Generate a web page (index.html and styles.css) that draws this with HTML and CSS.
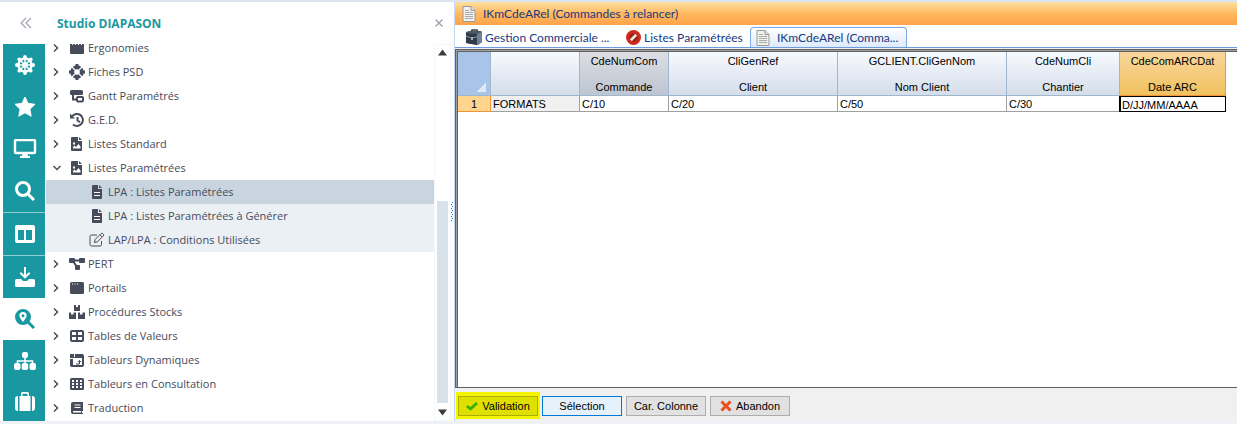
FILE: index.html
```
<!DOCTYPE html>
<html lang="fr">
<head>
    <meta charset="UTF-8">
    <meta name="viewport" content="width=device-width, initial-scale=1.0">
    <title>Studio DIAPASON</title>
    <link rel="stylesheet" href="styles.css">
</head>
<body>
    <div class="app">
        <nav class="rail">
            <button class="rail-toggle" aria-label="Réduire">
                <svg width="12" height="12" viewBox="0 0 12 12"><path d="M6 1L1 6l5 5M11 1L6 6l5 5"/></svg>
            </button>
            <button class="rail-item" aria-label="Navigation">
                <svg width="20" height="20" viewBox="0 0 20 20"><g class="line"><circle cx="10" cy="10" r="6.5" stroke-width="2.400"/><circle cx="10" cy="10" r="2"/><path d="M10 3v14M3 10h14M5 5l10 10M15 5L5 15"/></g><circle cx="10" cy="1.900" r="1.900"/><circle cx="10" cy="18.100" r="1.900"/><circle cx="1.900" cy="10" r="1.900"/><circle cx="18.100" cy="10" r="1.900"/><circle cx="4.300" cy="4.300" r="1.900"/><circle cx="15.700" cy="4.300" r="1.900"/><circle cx="4.300" cy="15.700" r="1.900"/><circle cx="15.700" cy="15.700" r="1.900"/></svg>
            </button>
            <button class="rail-item" aria-label="Favoris">
                <svg width="22" height="22" viewBox="0 0 22 22"><path d="M11 1l3 6.400 7 .9-5.100 4.900 1.300 7L11 16.800 4.800 20.200l1.300-7L1 8.300l7-.9z" stroke="#fff" stroke-linejoin="round"/></svg>
            </button>
            <button class="rail-item" aria-label="Écran">
                <svg width="24" height="20" viewBox="0 0 24 20"><rect class="line2" x="2" y="1" width="20" height="13" rx="1"/><path d="M10 14h4l1 3h2v2H7v-2h2z"/></svg>
            </button>
            <button class="rail-item" aria-label="Recherche">
                <svg width="20" height="20" viewBox="0 0 20 20"><circle class="line3" cx="8" cy="8" r="6.500"/><path class="line3" d="M13 13l6 6"/></svg>
            </button>
            <button class="rail-item split" aria-label="Colonnes">
                <svg width="20" height="18" viewBox="0 0 20 18"><path fill-rule="evenodd" d="M2 0h16a2 2 0 0 1 2 2v14a2 2 0 0 1-2 2H2a2 2 0 0 1-2-2V2a2 2 0 0 1 2-2zM3 5v10h6V5zM11 5v10h6V5z"/></svg>
            </button>
            <button class="rail-item split" aria-label="Télécharger">
                <svg width="20" height="20" viewBox="0 0 20 20"><path d="M9 0h2v8l3-3 1.300 1.400L10 11.800 4.700 6.400 6 5l3 3zM1.500 12H6l2 2h4l2-2h4.500a1.500 1.500 0 0 1 1.500 1.500v5a1.500 1.500 0 0 1-1.500 1.500h-17A1.500 1.500 0 0 1 0 18.500v-5A1.500 1.500 0 0 1 1.500 12z"/></svg>
            </button>
            <button class="rail-item active" aria-label="Localiser">
                <svg width="20" height="20" viewBox="0 0 20 20"><path d="M13 13l6 6" class="line3"/><path fill-rule="evenodd" d="M8 0a8 8 0 1 1 0 16A8 8 0 0 1 8 0zM8 3a3.600 3.600 0 0 0-3.600 3.600C4.400 9 8 13 8 13s3.600-4 3.600-6.400A3.600 3.600 0 0 0 8 3zM8 5.200a1.500 1.500 0 1 1 0 3 1.500 1.500 0 0 1 0-3z"/></svg>
            </button>
            <button class="rail-item" aria-label="Organigramme">
                <svg width="22" height="18" viewBox="0 0 22 18"><path class="line" d="M11 5v7M3.500 12V9h15v3"/><rect x="8" width="6" height="6" rx="2"/><rect y="11" width="6.500" height="7" rx="2"/><rect x="7.700" y="11" width="6.500" height="7" rx="2"/><rect x="15.500" y="11" width="6.500" height="7" rx="2"/></svg>
            </button>
            <button class="rail-item" aria-label="Valise">
                <svg width="20" height="19" viewBox="0 0 20 19"><path d="M3 4v15a3 3 0 0 1-3-3V7a3 3 0 0 1 3-3zM17 4v15a3 3 0 0 0 3-3V7a3 3 0 0 0-3-3z"/><path fill-rule="evenodd" d="M4.500 19V4H6V1.500Q6 0 7.500 0h5Q14 0 14 1.500V4h1.500v15zM7.500 4h5V1.700h-5z"/></svg>
            </button>
        </nav>

        <aside class="panel">
            <header class="panel-head">
                <h1>Studio DIAPASON</h1>
                <button class="panel-close" aria-label="Fermer">
                    <svg width="8" height="8" viewBox="0 0 8 8"><path d="M.5.5l7 7M7.500.5l-7 7"/></svg>
                </button>
            </header>
            <div class="panel-body">
                <div class="tree-wrap">
                    <ul class="tree">
                        <li><a href="#"><svg class="chev" viewBox="0 0 6 8"><path d="M1 .5L4.500 4 1 7.500"/></svg><svg class="ico" viewBox="0 0 16 16"><path d="M1 1h2v4h1V1h2v4h1V1h2v4h1V1h2v4h1V1h2v12a1 1 0 0 1-1 1H2a1 1 0 0 1-1-1z"/></svg>Ergonomies</a></li>
                        <li><a href="#"><svg class="chev" viewBox="0 0 6 8"><path d="M1 .5L4.500 4 1 7.500"/></svg><svg class="ico" viewBox="0 0 16 16"><circle cx="8" cy="8" r="4.800" fill="none" stroke="#474b5a" stroke-width="4"/><path class="cut" d="M3 3l3 3M13 3l-3 3M3 13l3-3M13 13l-3-3"/><path d="M6.500 0h3v3h-3zM6.500 13h3v3h-3zM0 6.500h3v3H0zM13 6.500h3v3h-3z"/></svg>Fiches PSD</a></li>
                        <li><a href="#"><svg class="chev" viewBox="0 0 6 8"><path d="M1 .5L4.500 4 1 7.500"/></svg><svg class="ico" viewBox="0 0 16 16"><rect x="1" y="2" width="13" height="5" rx="1.500"/><path class="stroke" d="M4 7v4.500h4"/><rect class="stroke" x="8" y="9" width="6" height="4.500" rx="1"/></svg>Gantt Paramétrés</a></li>
                        <li><a href="#"><svg class="chev" viewBox="0 0 6 8"><path d="M1 .5L4.500 4 1 7.500"/></svg><svg class="ico" viewBox="0 0 16 16"><path class="stroke" d="M3 4.500A6 6 0 1 1 4 12.500M8.500 5v3.500l2.500 1.700"/><path d="M1 1.500v5h5z"/></svg>G.E.D.</a></li>
                        <li><a href="#"><svg class="chev" viewBox="0 0 6 8"><path d="M1 .5L4.500 4 1 7.500"/></svg><svg class="ico" viewBox="0 0 16 16"><path d="M3 1h6v4h4v9a1 1 0 0 1-1 1H3a1 1 0 0 1-1-1V2a1 1 0 0 1 1-1zM10 1l3 3h-3z"/><path class="white" d="M4 12.500V11l1.500-1.500L7 11l2.500-3 2 2.500v2zM4 6.500h2v2H4z"/></svg>Listes Standard</a></li>
                        <li><a href="#"><svg class="chev open" viewBox="0 0 8 6"><path d="M.5 1L4 4.500 7.500 1"/></svg><svg class="ico" viewBox="0 0 16 16"><path d="M3 1h6v4h4v9a1 1 0 0 1-1 1H3a1 1 0 0 1-1-1V2a1 1 0 0 1 1-1zM10 1l3 3h-3z"/><path class="white" d="M4 12.500V11l1.500-1.500L7 11l2.500-3 2 2.500v2zM4 6.500h2v2H4z"/></svg>Listes Paramétrées</a>
                            <ul class="sub">
                                <li><a href="#" class="selected"><svg class="ico" viewBox="0 0 16 16"><path d="M4 1h5v4h4v9a1 1 0 0 1-1 1H4a1 1 0 0 1-1-1V2a1 1 0 0 1 1-1zM10 1l3 3h-3z"/><path class="white" d="M5 8h6v1H5zM5 11h6v1H5z"/></svg>LPA : Listes Paramétrées</a></li>
                                <li><a href="#"><svg class="ico" viewBox="0 0 16 16"><path d="M4 1h5v4h4v9a1 1 0 0 1-1 1H4a1 1 0 0 1-1-1V2a1 1 0 0 1 1-1zM10 1l3 3h-3z"/><path class="white" d="M5 8h6v1H5zM5 11h6v1H5z"/></svg>LPA : Listes Paramétrées à Générer</a></li>
                                <li><a href="#"><svg class="ico" viewBox="0 0 16 16"><path class="thin" d="M8 3H2.500Q1 3 1 4.500v8Q1 14 2.500 14H11q1.500 0 1.500-1.500V9M5.500 10.500l.6-3L12 1.600q.8-.8 1.700 0l.6.6q.8.9 0 1.700L8.400 9.900zM11 2.800L13.200 5"/></svg>LAP/LPA : Conditions Utilisées</a></li>
                            </ul>
                        </li>
                        <li><a href="#"><svg class="chev" viewBox="0 0 6 8"><path d="M1 .5L4.500 4 1 7.500"/></svg><svg class="ico" viewBox="0 0 16 16"><rect y="2" width="6" height="5" rx="1"/><rect x="10" y="2" width="6" height="5" rx="1"/><rect x="6" y="9" width="5" height="5" rx="1"/><path class="stroke" d="M5 4.500h6M4 5l4 6"/></svg>PERT</a></li>
                        <li><a href="#"><svg class="chev" viewBox="0 0 6 8"><path d="M1 .5L4.500 4 1 7.500"/></svg><svg class="ico" viewBox="0 0 16 16"><rect x="1" y="2" width="14" height="12" rx="1.500"/><path class="white" d="M3 3.500h1v1H3zM5.500 3.500h1v1h-1zM8 3.500h1v1H8z"/></svg>Portails</a></li>
                        <li><a href="#"><svg class="chev" viewBox="0 0 6 8"><path d="M1 .5L4.500 4 1 7.500"/></svg><svg class="ico" viewBox="0 0 16 16"><path d="M5 1h2v2h2V1h2v6H5zM0 8.500h2v2h2.500v-2h2.500V15H0zM9 8.500h2v2h2.500v-2H16V15H9z"/></svg>Procédures Stocks</a></li>
                        <li><a href="#"><svg class="chev" viewBox="0 0 6 8"><path d="M1 .5L4.500 4 1 7.500"/></svg><svg class="ico" viewBox="0 0 16 16"><rect class="stroke" x="2" y="3" width="12" height="10" rx="1"/><path class="stroke" d="M8 3v10M1 8h14"/></svg>Tables de Valeurs</a></li>
                        <li><a href="#"><svg class="chev" viewBox="0 0 6 8"><path d="M1 .5L4.500 4 1 7.500"/></svg><svg class="ico" viewBox="0 0 16 16"><rect class="stroke" x="2" y="3" width="12" height="11" rx="1"/><path d="M1 2h13v4H1zM1 6h3v8H1z"/><path class="thin" d="M7 12h3.500V8.500M9 10l1.500-1.500L12 10"/><path class="white" d="M5 2h1v3H5zM1 6h3v1H1z"/></svg>Tableurs Dynamiques</a></li>
                        <li><a href="#"><svg class="chev" viewBox="0 0 6 8"><path d="M1 .5L4.500 4 1 7.500"/></svg><svg class="ico" viewBox="0 0 16 16"><rect x="1" y="2" width="14" height="12" rx="1.500"/><path class="white" d="M3 4h2v2H3zM7 4h2v2H7zM11 4h2v2h-2zM3 7h2v2H3zM7 7h2v2H7zM11 7h2v2h-2zM3 10h2v2H3zM7 10h2v2H7zM11 10h2v2h-2z"/></svg>Tableurs en Consultation</a></li>
                        <li><a href="#"><svg class="chev" viewBox="0 0 6 8"><path d="M1 .5L4.500 4 1 7.500"/></svg><svg class="ico" viewBox="0 0 16 16"><path d="M4 2h10v9h-1v2h1v1H4a2 2 0 0 1-2-2V4a2 2 0 0 1 2-2z"/><path class="white" d="M5.500 4.500h6v1h-6zM5.500 7h6v1h-6zM4 11h8v1.500H4z"/></svg>Traduction</a></li>
                    </ul>
                </div>
                <div class="scroll">
                    <svg width="9" height="7" viewBox="0 0 9 7"><path d="M4.500.5L9 6.500H0z"/></svg>
                    <div class="thumb"></div>
                    <svg width="9" height="7" viewBox="0 0 9 7"><path d="M0 .5h9l-4.500 6z"/></svg>
                </div>
            </div>
        </aside>

        <div class="splitter">
            <svg width="3" height="20" viewBox="0 0 3 20"><path d="M0 2h1v1H0zM1 0h1v1H1zM0 6h1v1H0zM1 4h1v1H1zM0 10h1v1H0zM1 8h1v1H1zM0 14h1v1H0zM1 12h1v1H1zM0 18h1v1H0zM1 16h1v1H1z"/></svg>
        </div>

        <main class="main">
            <h2 class="titlebar">
                <svg width="14" height="16" viewBox="0 0 14 16"><path d="M1 .5h8l4 4v11H1z" fill="#f1f1ee" stroke="#999"/><path d="M9 .5v4h4" fill="#ddd" stroke="#999"/><path d="M3 4.500h4M3 6.500h8M3 8.500h8M3 10.500h8M3 12.500h8" stroke="#aaa"/></svg>
                IKmCdeARel (Commandes à relancer)
            </h2>
            <div class="tabs">
                <button class="tab first">
                    <svg width="16" height="16" viewBox="0 0 16 16"><path d="M5 3l1-2h5l1 2" fill="none" stroke="#333a44" stroke-width="1.500"/><path d="M0 3l3-1h12l1 1v10l-4 3-12-2z" fill="#4d5966"/><path d="M0 4l11 1v11L0 14z" fill="#303b47"/><path d="M11 5l5-2v10l-5 3z" fill="#718090"/><path d="M0 7l5 2 6-1" fill="none" stroke="#8693a2"/><path d="M5 8h2v3H5z" fill="#a5afba"/></svg>
                    Gestion Commerciale ...
                </button>
                <button class="tab second">
                    <svg width="15" height="15" viewBox="0 0 14 14"><circle cx="7" cy="7" r="7" fill="#cf2a1c"/><circle cx="7" cy="7" r="4" fill="#8f2418"/><path d="M4.500 9.500l5-5" stroke="#f6dcd8" stroke-width="2.500"/></svg>
                    Listes Paramétrées
                </button>
                <button class="tab current">
                    <svg width="14" height="16" viewBox="0 0 14 16"><path d="M1 .5h8l4 4v11H1z" fill="#f1f1ee" stroke="#999"/><path d="M9 .5v4h4" fill="#ddd" stroke="#999"/><path d="M3 4.500h4M3 6.500h8M3 8.500h8M3 10.500h8M3 12.500h8" stroke="#aaa"/></svg>
                    IKmCdeARel (Comma...
                </button>
            </div>
            <div class="sheet">
                <table class="grid">
                    <colgroup>
                        <col class="w-num"><col class="w-s"><col class="w-s"><col class="w-l"><col class="w-l"><col class="w-m"><col class="w-date">
                    </colgroup>
                    <thead>
                        <tr>
                            <th class="corner"></th>
                            <th></th>
                            <th class="locked"><span>CdeNumCom</span><span>Commande</span></th>
                            <th><span>CliGenRef</span><span>Client</span></th>
                            <th><span>GCLIENT.CliGenNom</span><span>Nom Client</span></th>
                            <th><span>CdeNumCli</span><span>Chantier</span></th>
                            <th class="hot"><span>CdeComARCDat</span><span>Date ARC</span></th>
                        </tr>
                    </thead>
                    <tbody>
                        <tr>
                            <th class="num">1</th>
                            <td class="label">FORMATS</td>
                            <td>C/10</td>
                            <td>C/20</td>
                            <td>C/50</td>
                            <td>C/30</td>
                            <td class="cursor">D/JJ/MM/AAAA</td>
                        </tr>
                    </tbody>
                </table>
            </div>
            <footer class="actions">
                <div class="mark">
                    <button class="btn"><svg width="12" height="10" viewBox="0 0 12 10"><path d="M1 5l3.500 3L11 2" fill="none" stroke="#35b000" stroke-width="2.800"/></svg>Validation</button>
                </div>
                <button class="btn default">Sélection</button>
                <button class="btn">Car. Colonne</button>
                <button class="btn"><svg width="12" height="12" viewBox="0 0 12 12"><path d="M1.500 1.500l9 9M10.500 1.500l-9 9" stroke="#e8501e" stroke-width="3"/></svg>Abandon</button>
            </footer>
        </main>
    </div>
</body>
</html>
```
FILE: styles.css
```
* {
    box-sizing: border-box;
}
body {
    margin: 0;
    background: #fff;
    font-family: "Open Sans", sans-serif;
    font-size: 11px;
    color: #474b5a;
}
button {
    margin: 0;
    padding: 0;
    border: none;
    background: none;
    font: inherit;
    color: inherit;
    cursor: pointer;
}
ul {
    list-style: none;
    margin: 0;
    padding: 0;
}
svg {
    display: block;
    flex: none;
}
.app {
    display: flex;
    height: 100vh;
    padding-left: 3px;
    border-top: 2px solid #dbe4ef;
    border-bottom: 3px solid #eef1f5;
}

/* icon rail */
.rail {
    display: flex;
    flex-direction: column;
    width: 42px;
    background: #1998a1;
}
.rail-toggle {
    display: flex;
    flex: none;
    align-items: center;
    justify-content: center;
    height: 42px;
    padding-left: 4px;
    background: #fff;
}
.rail-toggle path {
    fill: none;
    stroke: #a2a9b5;
    stroke-width: 1.3;
}
.rail-item {
    display: flex;
    flex: none;
    align-items: center;
    justify-content: center;
    height: 42px;
    padding-left: 1px;
    fill: #fff;
}
.rail-item:last-child {
    flex: 1;
}
.split {
    height: 43px;
    border-top: 1px solid #8fcdd1;
}
.active {
    background: #fff;
    fill: #1998a1;
}
.line {
    fill: none;
    stroke: #fff;
    stroke-width: 1.5;
}
.line2 {
    fill: none;
    stroke: #fff;
    stroke-width: 2.4;
}
.line3 {
    fill: none;
    stroke: #fff;
    stroke-width: 3;
}
.active .line3 {
    stroke: #1998a1;
}

/* tree panel */
.panel {
    display: flex;
    flex-direction: column;
    width: 406px;
    padding-left: 1px;
}
.panel-head {
    display: flex;
    flex: none;
    align-items: center;
    justify-content: space-between;
    height: 42px;
    padding: 0 8px 0 11px;
}
.panel-head h1 {
    margin: 0;
    font-size: 12px;
    color: #1998a1;
}
.panel-close path {
    fill: none;
    stroke: #a2a9b5;
    stroke-width: 1.5;
}
.panel-body {
    display: flex;
    flex: 1;
    min-height: 0;
}
.tree-wrap {
    flex: 1;
    overflow: hidden;
}
.tree {
    margin-top: -8px;
}
.tree a {
    display: flex;
    align-items: center;
    height: 24px;
    padding: 0 0 1px 7px;
    line-height: 15px;
    color: #474b5a;
    text-decoration: none;
    white-space: nowrap;
}
.chev {
    width: 6px;
    height: 8px;
    margin-right: 10px;
    fill: none;
    stroke: #474b5a;
    stroke-width: 1.5;
}
.open {
    width: 8px;
    height: 6px;
    margin-right: 8px;
}
.ico {
    width: 16px;
    height: 16px;
    margin-right: 3px;
    fill: #474b5a;
}
.stroke {
    fill: none;
    stroke: #474b5a;
    stroke-width: 2;
}
.thin {
    fill: none;
    stroke: #474b5a;
}
.cut {
    stroke: #fff;
    stroke-width: 1.2;
}
.white {
    fill: #fff;
}
.sub {
    background: #ebf0f4;
}
.tree .sub a {
    padding-left: 43px;
}
.tree .selected {
    background: #c8d5e0;
}
.scroll {
    display: flex;
    flex-direction: column;
    align-items: center;
    width: 17px;
    padding: 4px 0;
    border: 1px solid #f5f7fb;
    fill: #3c3c3c;
}
.thumb {
    width: 11px;
    height: 55%;
    margin: auto 0 6px;
    background: #d8e2eb;
}
.splitter {
    display: flex;
    align-items: center;
    width: 4px;
    background: #fbfcfe;
    border-right: 1px solid #c5d9f4;
    fill: #1a73d6;
}

/* right side */
.main {
    display: flex;
    flex: 1;
    flex-direction: column;
    min-width: 0;
    background: #f0f0f0;
}
.titlebar {
    display: flex;
    align-items: center;
    gap: 7px;
    height: 23px;
    margin: 0;
    padding-left: 7px;
    background: linear-gradient(#ffe0a0, #ffb860 50%, #ffa349);
    font-family: Lato, sans-serif;
    font-size: 12px;
    font-weight: normal;
    color: #153a80;
}
.tabs {
    display: flex;
    align-items: flex-end;
    height: 23px;
    padding-left: 6px;
    background: #fff;
    border-bottom: 1px solid #6d9be0;
    font-family: Lato, sans-serif;
    font-size: 12px;
    color: #153a80;
}
.tab {
    display: flex;
    align-items: center;
    gap: 3px;
    height: 20px;
    padding-left: 5px;
    white-space: nowrap;
}
.first {
    width: 160px;
}
.second {
    width: 129px;
}
.current {
    gap: 7px;
    width: 157px;
    background: linear-gradient(#fff, #dcebfd);
    border: 1px solid #7ea6e3;
    border-bottom: none;
    border-radius: 4px 4px 0 0;
}
.sheet {
    flex: 1;
    min-height: 0;
    margin-top: 1px;
    padding: 2px 0 0 2px;
    overflow: hidden;
    background: #fff;
    border: 1px solid #606060;
    border-right: none;
    box-shadow: inset 1px 1px #a0a0a0, inset 2px 2px #606060;
}
.grid {
    table-layout: fixed;
    width: 768px;
    border-collapse: separate;
    border-spacing: 0;
    font-family: "Liberation Sans", sans-serif;
    font-size: 11px;
    color: #000;
}
.w-num {
    width: 33px;
}
.w-s {
    width: 89px;
}
.w-l {
    width: 169px;
}
.w-m {
    width: 113px;
}
.w-date {
    width: 106px;
}
.grid th {
    padding: 1px 0 0;
    font-weight: normal;
}
.grid thead th {
    height: 44px;
    background: linear-gradient(#f7fafe, #d4dde9);
    border-right: 1px solid #9eb6ce;
    border-bottom: 1px solid #9eb6ce;
}
.grid th span {
    display: block;
    line-height: 16px;
}
.grid th span + span {
    margin-top: 10px;
}
.grid thead .corner {
    background: linear-gradient(135deg, transparent 50%, #dfe9f7 50%) right 4px bottom 3px / 9px 9px no-repeat #a9c4e9;
}
.grid thead .locked {
    background: linear-gradient(#dcdee2, #bcc5d2);
}
.grid thead .hot {
    background: linear-gradient(#f8d79c, #f1c15f);
    border-color: #f29536;
}
.grid .num {
    background: #ffd58d;
    border-right: 1px solid #f29536;
    border-bottom: 1px solid #f29536;
}
.grid td {
    height: 16px;
    padding: 1px 2px 0;
    line-height: 14px;
    border-right: 1px solid #a0a0a0;
    border-bottom: 1px solid #a0a0a0;
}
.grid .label {
    background: #f0f0f0;
}
.grid .cursor {
    border: none;
    box-shadow: inset 0 0 0 1px #000, -1px 0 #000;
}
.actions {
    display: flex;
    flex: none;
    align-items: center;
    gap: 4px;
    height: 33px;
    padding: 2px 1px 0;
}
.mark {
    margin-right: -2px;
    padding: 4px 2px 3px;
    background: #f5f500;
}
.btn {
    display: flex;
    align-items: center;
    justify-content: center;
    gap: 4px;
    width: 80px;
    height: 20px;
    background: #e1e1e1;
    border: 1px solid #adadad;
    font-family: "Liberation Sans", sans-serif;
    color: #000;
    white-space: nowrap;
}
.mark .btn {
    background: #e0e000;
    border-color: #adad00;
}
.default {
    background: #e5f1fb;
    border-color: #0078d7;
}
```
